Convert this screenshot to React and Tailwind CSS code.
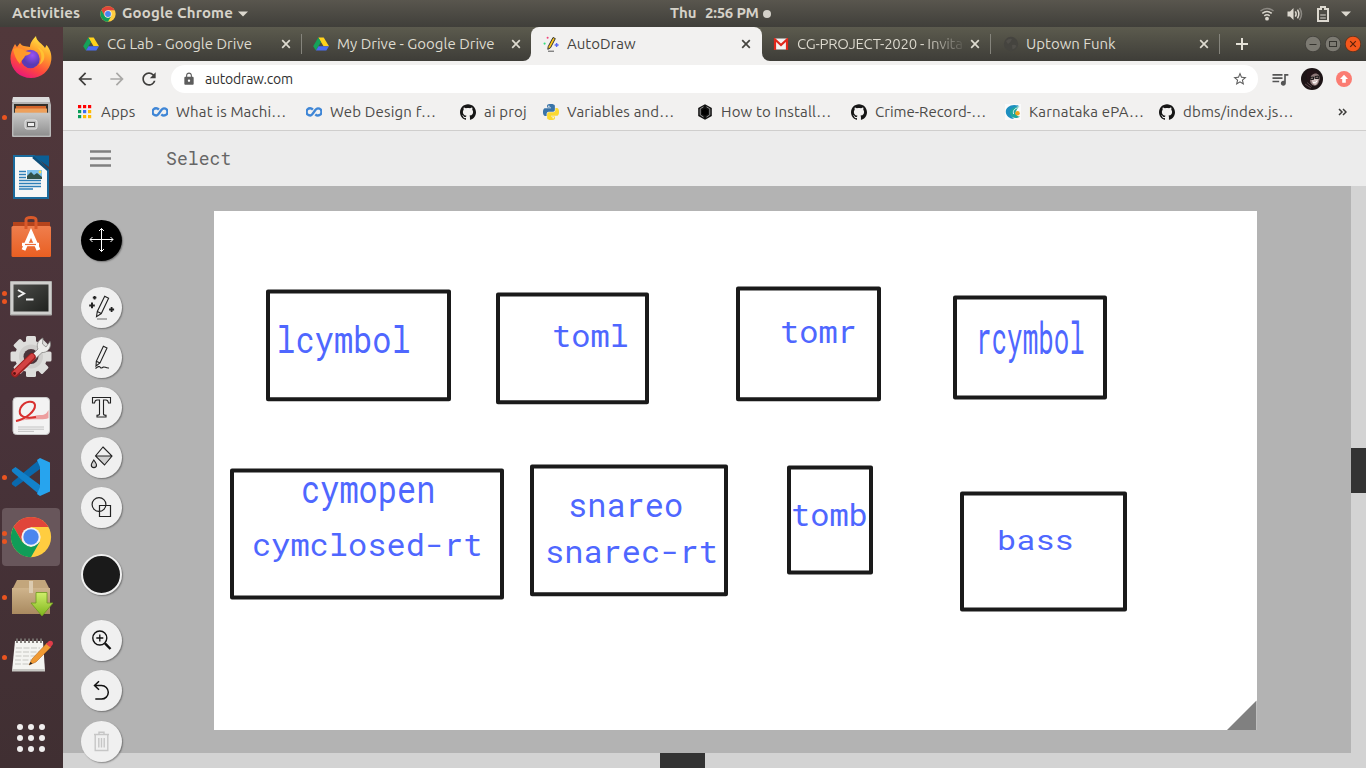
import React from "react";
import { MdArrowBack, MdArrowForward, MdRefresh, MdLock, MdStarBorder, MdQueueMusic } from "react-icons/md";
import { SiGithub } from "react-icons/si";

const ChromeLogo = ({ className }) => (
  <svg viewBox="0 0 48 48" className={className}>
    <circle cx="24" cy="24" r="23" fill="#ffcd40" />
    <path d="M4.1 12.5 A23 23 0 0 1 43.9 12.5 H24 L14 29.8 Z" fill="#e0453a" />
    <path d="M4.1 12.5 L14 29.8 L24 35.5 L33.9 29.8 L24 47 A23 23 0 0 1 4.1 12.5 Z" fill="#109d58" />
    <circle cx="24" cy="24" r="11" fill="#f2f2f2" />
    <circle cx="24" cy="24" r="8.8" fill="#4a86ef" />
  </svg>
);

const DriveLogo = () => (
  <svg viewBox="0 0 16 14" className="h-[14px] w-[16px] shrink-0">
    <path d="M5.3 0.5 H10.7 L16 9.3 H10.6 Z" fill="#ffd21c" />
    <path d="M5.3 0.5 L8 5 L2.9 13.6 L0.2 9.3 Z" fill="#13a259" />
    <path d="M5.5 9.3 H16 L13.3 13.6 H2.9 Z" fill="#4a6cf0" />
  </svg>
);

const AutoDrawLogo = () => (
  <svg viewBox="0 0 16 16" className="h-4 w-4 shrink-0">
    <path d="M10 1.5 L12.3 2.6 L7.5 11.8 L4.8 13.3 L5.2 10.6 Z" fill="#ffc91a" stroke="#333" strokeWidth="1" />
    <path d="M5 15.2 H11" stroke="#555" strokeWidth="1" />
    <circle cx="4.6" cy="1.8" r="1" fill="#f0447a" />
    <circle cx="1.6" cy="7.6" r="1.1" fill="#35e07c" />
    <path d="M13.6 7 V11 M11.6 9 H15.6" stroke="#5568f5" strokeWidth="1.4" />
  </svg>
);

const GmailLogo = () => (
  <svg viewBox="0 0 16 12" className="h-3 w-4 shrink-0">
    <rect x="1" y="0.5" width="14" height="11" fill="#f4f2f1" />
    <path d="M2 12 V1.5 L8 7 L14 1.5 V12" fill="none" stroke="#e0281c" strokeWidth="2.2" />
  </svg>
);

const GlobeIcon = () => (
  <svg viewBox="0 0 16 16" className="h-4 w-4 shrink-0">
    <circle cx="8" cy="8" r="7.2" fill="#45443f" />
    <path d="M3 5 Q6 2 9 3 Q8 6 5 8 Z M9 9 Q12 8 13.5 10 Q12 13 9.5 13.5 Z" fill="#514f4a" />
  </svg>
);

const Close = ({ className = "" }) => (
  <svg viewBox="0 0 10 10" className={`h-[10px] w-[10px] shrink-0 ${className}`}>
    <path d="M1.2 1.2 L8.8 8.8 M8.8 1.2 L1.2 8.8" stroke="currentColor" strokeWidth="1.7" />
  </svg>
);

const Infinity8 = () => (
  <svg viewBox="0 0 16 10" className="h-[10px] w-4 shrink-0">
    <path
      d="M6.9 2.6 C5.8 1.4 4.8 1.3 4.1 1.3 A3.5 3.5 0 0 0 4.1 8.5 C7.2 8.5 8.6 1.4 12 1.4 A3.5 3.5 0 0 1 12 8.5 C10.8 8.5 10 8 9.3 7.3"
      fill="none"
      stroke="#3f86d6"
      strokeWidth="2.4"
    />
  </svg>
);

const AppsGrid = () => (
  <svg viewBox="0 0 14 14" className="h-[14px] w-[14px] shrink-0">
    {["#f00", "#f00", "#f00", "#0a9d58", "#3b6cf5", "#ffba00", "#0a9d58", "#ffba00", "#ffba00"].map((c, i) => (
      <rect key={i} x={(i % 3) * 5} y={Math.floor(i / 3) * 5} width="3.2" height="3.2" fill={c} />
    ))}
  </svg>
);

const snake =
  "M14.25.18l.9.2.73.26.59.3.45.32.34.34.25.34.16.33.1.3.04.26.02.2-.01.13V8.5l-.05.63-.13.55-.21.46-.26.38-.3.31-.33.25-.35.19-.35.14-.33.1-.3.07-.26.04-.21.02H8.77l-.69.05-.59.14-.5.22-.41.27-.33.32-.27.35-.2.36-.15.37-.1.35-.07.32-.04.27-.02.21v3.06H3.17l-.21-.03-.28-.07-.32-.12-.35-.18-.36-.26-.36-.36-.35-.46-.32-.59-.28-.73-.21-.88-.14-1.05-.05-1.23.06-1.22.16-1.04.24-.87.32-.71.36-.57.4-.44.42-.33.42-.24.4-.16.36-.1.32-.05.24-.01h.16l.06.01h8.16v-.83H6.18l-.01-2.75-.02-.37.05-.34.11-.31.17-.28.25-.26.31-.23.38-.2.44-.18.51-.15.58-.12.64-.1.71-.06.77-.04.84-.02 1.27.05z";

const PythonLogo = () => (
  <svg viewBox="0 0 24 24" className="h-4 w-4 shrink-0">
    <path d={snake} fill="#3a74a8" />
    <path d={snake} fill="#fbd932" transform="rotate(180 12 12)" />
    <circle cx="8.8" cy="3.4" r="1.1" fill="#fff" />
    <circle cx="15.2" cy="20.6" r="1.1" fill="#fff" />
  </svg>
);

const HexLogo = () => (
  <svg viewBox="0 0 16 16" className="h-4 w-4 shrink-0">
    <path d="M8 0.3 L14.8 4.1 V11.9 L8 15.7 L1.2 11.9 V4.1 Z" fill="#111" />
    <path d="M6.5 2.8 L3.2 4.8 V10.9 L6.5 13 M9.5 2.8 L12.8 4.8 V10.9 L9.5 13" fill="none" stroke="#a5a5a5" strokeWidth="0.9" />
    <path d="M8 4.5 L11 6.2 V9.8 L8 11.5 L5 9.8 V6.2 Z" fill="#000" />
  </svg>
);

const SwirlLogo = () => (
  <svg viewBox="0 0 16 16" className="h-4 w-4 shrink-0">
    <rect width="16" height="16" fill="#fafafa" />
    <path d="M14 2 C7 -1 0.5 3 0.8 8 C1 12 5 15 9 15 C5 12 4 5 14 2 Z" fill="#1d8fc0" />
    <path d="M14.5 2.8 C7.5 2.5 3.8 6 5.3 10.5 C7 14.5 12 15 15 12.5 C11 12.5 8 8 14.5 2.8 Z" fill="#1fa79b" />
    <path d="M14.5 3.6 C9.5 4 7.6 6.5 8.6 10" fill="none" stroke="#fafafa" strokeWidth="0.9" />
    <circle cx="12.5" cy="9.3" r="2.3" fill="#f0a31c" />
  </svg>
);

const Github = () => <SiGithub className="h-4 w-4 shrink-0 text-[#161616]" />;

const Caret = () => (
  <svg viewBox="0 0 10 6" className="h-[6px] w-[10px]">
    <path d="M0 0.5 H10 L5 5.6 Z" fill="#dcd8cf" />
  </svg>
);

function TopBar() {
  return (
    <header className="flex h-[27px] items-center bg-linear-to-b from-[#59564e] to-[#403f3a] text-[15px] font-bold text-[#d6d2c9]">
      <span className="ml-3 w-[88px] whitespace-nowrap tracking-[0.15px]">Activities</span>
      <ChromeLogo className="h-4 w-4" />
      <span className="ml-[6px] w-[116px] whitespace-nowrap tracking-[0.15px]">Google Chrome</span>
      <Caret />
      <span className="ml-[422px] w-[35px] whitespace-nowrap">Thu</span>
      <span className="w-[58px] whitespace-nowrap tracking-[-0.25px]">2:56 PM</span>
      <span className="h-2 w-2 rounded-full bg-[#d4d1ca]" />
      <div className="ml-auto flex items-center pr-[15px]">
        <svg viewBox="0 0 16 14" className="mr-3 h-[14px] w-4" fill="none" strokeWidth="1.5">
          <path d="M1.5 4 Q8 -1 14.5 4" stroke="#8b8882" />
          <path d="M3.3 6.4 Q8 2.8 12.7 6.4" stroke="#dcd8cf" />
          <path d="M5.3 8.8 Q8 6.7 10.7 8.8" stroke="#dcd8cf" />
          <circle cx="8" cy="11.7" r="1.9" fill="#dcd8cf" />
        </svg>
        <svg viewBox="0 0 16 14" className="mr-[14px] h-[14px] w-4" fill="none" strokeWidth="1.5">
          <path d="M0.5 4.5 H3 L6.5 1 V13 L3 9.5 H0.5 Z" fill="#dcd8cf" />
          <path d="M8.3 4.3 Q10 7 8.3 9.7 M10.5 2.7 Q13.2 7 10.5 11.3" stroke="#dcd8cf" />
          <path d="M12.5 1 Q16.5 7 12.5 13" stroke="#8b8882" />
        </svg>
        <svg viewBox="0 0 12 16" className="mr-3 h-4 w-3" fill="none">
          <path d="M1 3 H4 V1 H8 V3 H11 V15 H1 Z" stroke="#dcd8cf" strokeWidth="2" />
          <path d="M3.2 9 H8.8 M3.2 12 H8.8" stroke="#dcd8cf" strokeWidth="1.2" />
        </svg>
        <Caret />
      </div>
    </header>
  );
}

const FirefoxIcon = () => (
  <svg viewBox="0 0 44 44" className="h-11 w-11">
    <defs>
      <linearGradient id="ff" x1="0.8" y1="0" x2="0.3" y2="1">
        <stop offset="0" stopColor="#fff34a" /><stop offset="0.35" stopColor="#ffa22b" /><stop offset="0.7" stopColor="#ff4a3c" /><stop offset="1" stopColor="#e8157c" />
      </linearGradient>
      <radialGradient id="ffp" cx="0.6" cy="0.3"><stop offset="0" stopColor="#9a52f5" /><stop offset="1" stopColor="#5a3bb4" /></radialGradient>
    </defs>
    <path d="M27 1 C27 6 34 9 36 13 L37.5 10 C41 14 43 19 42.3 25 C41 36 32 43 22 43 C11 43 2 35 1.5 24 C1.3 19 3 14 6 9 L8 12 L11 8 C12 10 14 11 15 11 L21 12 C21 8 24 4 27 1 Z" fill="url(#ff)" />
    <circle cx="21.5" cy="24" r="9.2" fill="url(#ffp)" />
    <path d="M4 14 C8 12 13 13 16 16 L22 17.5 C21 20 17 20.5 16 21 C15 24 12 25 11 29 C7 25 5 19 4 14 Z" fill="#ff9a2a" />
    <path d="M28 12 C34 17 33 25 30 30 C38 26 37 15 28 12 Z" fill="#ffc933" opacity="0.8" />
  </svg>
);

const FilesIcon = () => (
  <svg viewBox="0 0 44 44" className="h-11 w-11">
    <defs><linearGradient id="fl" x1="0" y1="0" x2="0" y2="1"><stop offset="0" stopColor="#c9c9c9" /><stop offset="1" stopColor="#8e8e8e" /></linearGradient></defs>
    <path d="M4 2 H40 L42 10 V41 Q42 42 41 42 H4 Q3 42 3 41 V10 Z" fill="#b4b4b4" />
    <path d="M4 2 H40 L41 7 H3 Z" fill="#dcdcdc" />
    <rect x="5" y="9" width="34" height="10" fill="#34302b" />
    <rect x="7" y="11" width="30" height="3" fill="#d3652b" />
    <rect x="6" y="13.5" width="32" height="5" fill="#eda05c" />
    <rect x="4" y="18" width="37" height="23" rx="1" fill="url(#fl)" stroke="#c8c8c8" strokeWidth="0.6" />
    <rect x="16" y="25" width="12" height="9" rx="2" fill="#b9b9b9" stroke="#e6e6e6" />
    <rect x="18.5" y="27.5" width="7" height="4" fill="#eee" stroke="#555" />
  </svg>
);

const WriterIcon = () => (
  <svg viewBox="0 0 44 44" className="h-11 w-11">
    <path d="M5 1 H25 L39 15 V43 H5 Z" fill="#f7f7f7" stroke="#1a6a9c" strokeWidth="2" />
    <path d="M24 0.5 H40 V12 Z" fill="#0b5f95" />
    <path d="M24 2 L39 15" stroke="#0e4e79" strokeWidth="2.5" />
    <path d="M10 16.5 H17 M10 19.5 H17 M10 22.5 H17 M10 25.5 H32 M10 28.5 H32 M10 31.5 H32 M10 34 H24" stroke="#2e7fb8" strokeWidth="1.5" />
    <rect x="18" y="15" width="15" height="9" fill="#7cc0ec" />
    <path d="M18 24 V21 L22 17 L25 20 L28 18 L33 22 V24 Z" fill="#31524a" />
    <circle cx="31" cy="17" r="1.4" fill="#f7dc4c" />
  </svg>
);

const SoftwareIcon = () => (
  <svg viewBox="0 0 44 44" className="h-11 w-11">
    <defs><linearGradient id="sw" x1="0" y1="0" x2="0" y2="1"><stop offset="0" stopColor="#ef7e4d" /><stop offset="1" stopColor="#e95f22" /></linearGradient></defs>
    <path d="M4 7 H41 V12 H4 Z" fill="#b5441c" />
    <rect x="2.5" y="11" width="39.5" height="31" rx="1.5" fill="url(#sw)" />
    <path d="M17 14 V5 Q17 2.5 22 2.5 Q27 2.5 27 5 V14" fill="none" stroke="#d9592a" strokeWidth="3" />
    <path d="M14.5 35 L22 18 L29.5 35" fill="none" stroke="#fff" strokeWidth="4" />
    <path d="M13 29.5 H30" stroke="#fff" strokeWidth="3.4" />
    <path d="M16 29.5 H27" stroke="#ec6c38" strokeWidth="1.2" />
  </svg>
);

const TerminalIcon = () => (
  <svg viewBox="0 0 44 44" className="h-11 w-11">
    <defs><linearGradient id="tm" x1="0" y1="0" x2="1" y2="1"><stop offset="0" stopColor="#4c4d4a" /><stop offset="1" stopColor="#20221f" /></linearGradient></defs>
    <rect x="1" y="6" width="42" height="34.5" rx="1" fill="#b0b0ae" />
    <rect x="2" y="7" width="40" height="32" fill="#cfcfcd" />
    <rect x="4.5" y="9.5" width="35" height="27" fill="url(#tm)" />
    <path d="M9 15 L15 18.5 L9 22" fill="none" stroke="#f0f0f0" strokeWidth="2" />
    <path d="M17 24.5 H24.5" stroke="#f0f0f0" strokeWidth="2" />
  </svg>
);

const SettingsIcon = () => (
  <svg viewBox="0 0 44 44" className="h-11 w-11">
    {[0, 45, 90, 135].map((a) => (
      <rect key={a} x="17" y="1" width="10" height="41" rx="1.5" fill="#dededc" transform={`rotate(${a} 22 21.5)`} />
    ))}
    <circle cx="22" cy="21.5" r="16" fill="#dededc" />
    <circle cx="22" cy="21.5" r="12" fill="#cfcecc" />
    <circle cx="22" cy="21.5" r="7.5" fill="#4a353b" />
    <path d="M19 24 L29 14 C27 10 29 5 34 3 L33.5 9 L37 12 L41 6.5 C43 13 38 18 33 17.5 L23 27 Z" fill="#ececea" stroke="#858583" strokeWidth="0.8" />
    <path d="M6 38.5 L23 22" stroke="#9b1f1f" strokeWidth="7.5" strokeLinecap="round" />
    <path d="M6 38 L23 21.5" stroke="#d34242" strokeWidth="5" strokeLinecap="round" />
    <circle cx="5.5" cy="38.5" r="1.4" fill="#5b1111" />
  </svg>
);

const DocViewerIcon = () => (
  <svg viewBox="0 0 44 44" className="h-11 w-11">
    <rect x="4" y="2.5" width="36.5" height="37" rx="3.5" fill="#f3f3f3" stroke="#c8c8c8" />
    <path d="M7 26 C16 26 25 19 32 20 C36 20 38 18 39.5 15 V23 C34 26 24 22 7 27 Z" fill="#e85a5a" fillOpacity="0.55" />
    <path d="M7 26 C17 24 26.5 16 26 10 C25 5.5 16 5 11.5 13 C8 22 17 24 27 22" fill="none" stroke="#d8302f" strokeWidth="2" />
    <path d="M9 32 H35 M9 34.2 H35 M9 36.4 H25" stroke="#bdbdbd" strokeWidth="0.9" />
  </svg>
);

const CodeIcon = () => (
  <svg viewBox="0 0 44 44" className="h-11 w-11">
    <path d="M3 29.5 L6.5 32 L31 14 V4 L4 26.5 Q2 28 3 29.5 Z" fill="#0a69ad" />
    <path d="M3 14.5 L6.5 12 L31 30 V40 L4 17.5 Q2 16 3 14.5 Z" fill="#1282cb" />
    <path d="M31 3 L41 7.5 V36.5 L31 41 L28 39 L31 32 V12 L28 5 Z" fill="#27a4ee" />
  </svg>
);

const PackageIcon = () => (
  <svg viewBox="0 0 44 44" className="h-11 w-11">
    <defs>
      <linearGradient id="pk" x1="0" y1="0" x2="0" y2="1"><stop offset="0" stopColor="#cfb48c" /><stop offset="1" stopColor="#a98a60" /></linearGradient>
      <linearGradient id="ar" x1="0" y1="0" x2="0" y2="1"><stop offset="0" stopColor="#cfee6a" /><stop offset="1" stopColor="#7fb51c" /></linearGradient>
    </defs>
    <path d="M8 5 H36 L41 15 H3 Z" fill="#c3a67c" />
    <rect x="3" y="13" width="38" height="26" fill="url(#pk)" />
    <path d="M20 6 H24 V18 H20 Z" fill="#dccbb0" />
    <path d="M27 17.5 H38 V28 H44 L33 41 L22 28 H27 Z" fill="url(#ar)" stroke="#6c9a1e" strokeWidth="0.8" />
  </svg>
);

const NotesIcon = () => (
  <svg viewBox="0 0 44 44" className="h-11 w-11">
    <path d="M6 6 H34 L36 36 H3 Z" fill="#f4f4f1" />
    <path d="M3 34 H36 V36.5 H3 Z" fill="#c8c8c4" />
    <path d="M8 3.5 V8 M12 3.5 V8 M16 3.5 V8 M20 3.5 V8 M24 3.5 V8 M28 3.5 V8 M32 3.5 V8" stroke="#77736f" strokeWidth="1.8" />
    <path d="M7 13 H31 M6.5 17 H31 M6.5 21 H30 M6 25 H22 M6 29 H20" stroke="#c6c6c2" strokeWidth="1.2" strokeDasharray="6 1.5" />
    <path d="M20 30 L23 24 L38 8 L42 12 L27 27 Z" fill="#f09a33" stroke="#b86a1d" strokeWidth="0.6" />
    <path d="M37 9 L40 6 Q44 5 44 9 L41.5 12.5 Z" fill="#df3d49" />
    <path d="M20 30 L21.5 27 L23.5 28.5 Z" fill="#222" />
  </svg>
);

const dock = [
  { Icon: FirefoxIcon, dots: 0 },
  { Icon: FilesIcon, dots: 1 },
  { Icon: WriterIcon, dots: 0 },
  { Icon: SoftwareIcon, dots: 0 },
  { Icon: TerminalIcon, dots: 2 },
  { Icon: SettingsIcon, dots: 0 },
  { Icon: DocViewerIcon, dots: 0 },
  { Icon: CodeIcon, dots: 1 },
  { Icon: () => <ChromeLogo className="h-[42px] w-[42px]" />, dots: 2, active: true },
  { Icon: PackageIcon, dots: 1 },
  { Icon: NotesIcon, dots: 1 },
];

function Dock() {
  return (
    <nav className="flex w-[63px] shrink-0 flex-col items-center bg-linear-to-b from-[#51383b] via-[#49333a] to-[#402f32]">
      {dock.map(({ Icon, dots, active }, i) => (
        <div key={i} className="flex h-[60px] w-full items-center">
          <div className={`ml-[2px] flex h-[58px] w-[58px] items-center rounded-[4px] ${active ? "bg-[#68565b]" : ""}`}>
            <div className="flex w-[5px] shrink-0 flex-col gap-[3px]">
              {Array.from({ length: dots }, (_, d) => (
                <span key={d} className="h-[5px] w-[5px] rounded-full bg-[#e95420]" />
              ))}
            </div>
            <div className="ml-[2px] flex w-11 justify-center">
              <Icon />
            </div>
          </div>
        </div>
      ))}
      <div className="mr-[2px] mt-[37px] grid grid-cols-3 gap-[5px]">
        {Array.from({ length: 9 }, (_, i) => (
          <span key={i} className="h-[6px] w-[6px] rounded-full bg-[#f0eeee]" />
        ))}
      </div>
    </nav>
  );
}

function Tab({ icon, title, width, gap = "ml-2", fade }) {
  return (
    <div className={`flex h-[34px] shrink-0 items-center text-[#dedbd0] ${width}`}>
      {icon}
      <span className={`flex-1 whitespace-nowrap ${gap} ${fade ? "bg-linear-to-r from-[#dedbd0] from-75% to-[#4f4e46] to-98% bg-clip-text tracking-[-0.27px] text-transparent" : ""}`}>
        {title}
      </span>
      <Close />
    </div>
  );
}

function TabStrip() {
  return (
    <div className="flex h-[34px] items-center bg-linear-to-b from-[#5c5b4e] to-[#3e3d38] text-[15px]">
      <div className="w-5 shrink-0" />
      <Tab icon={<DriveLogo />} title="CG Lab - Google Drive" width="w-[208px]" />
      <div className="ml-[10px] mr-[11px] h-5 w-px shrink-0 bg-[#85847c]" />
      <Tab icon={<DriveLogo />} title="My Drive - Google Drive" width="w-[208px]" />
      <div className="ml-[2px] h-[34px] shrink-0 bg-[#f2f1f0]">
        <div className="h-[34px] w-2 rounded-br-[8px] bg-linear-to-b from-[#5c5b4e] to-[#3e3d38]" />
      </div>
      <div className="h-[34px] w-[231px] shrink-0 bg-[#5c5b4e]">
        <div className="flex h-[34px] w-full items-center rounded-t-[8px] bg-[#f2f1f0] pl-3 pr-[11px] text-[#45443f]">
          <AutoDrawLogo />
          <span className="ml-2 flex-1">AutoDraw</span>
          <Close />
        </div>
      </div>
      <div className="h-[34px] shrink-0 bg-[#f2f1f0]">
        <div className="h-[34px] w-2 rounded-bl-[8px] bg-linear-to-b from-[#5c5b4e] to-[#3e3d38]" />
      </div>
      <div className="w-[3px] shrink-0" />
      <Tab icon={<GmailLogo />} title="CG-PROJECT-2020 - Invita" width="w-[207px]" fade />
      <div className="ml-[10px] mr-3 h-5 w-px shrink-0 bg-[#85847c]" />
      <Tab icon={<GlobeIcon />} title="Uptown Funk" width="w-[206px]" gap="ml-[7px]" />
      <div className="ml-[10px] h-5 w-px shrink-0 bg-[#85847c]" />
      <svg viewBox="0 0 12 12" className="ml-4 h-3 w-3 shrink-0"><path d="M6 0 V12 M0 6 H12" stroke="#e4e1d7" strokeWidth="2" /></svg>
      <div className="ml-auto mr-[5px] flex gap-1">
        <svg viewBox="0 0 16 16" className="h-4 w-4"><circle cx="8" cy="8" r="7.8" fill="#7c7a72" stroke="#383732" strokeWidth="0.7" /><path d="M4.5 8.5 H11.5" stroke="#35342f" /></svg>
        <svg viewBox="0 0 16 16" className="h-4 w-4"><circle cx="8" cy="8" r="7.8" fill="#7c7a72" stroke="#383732" strokeWidth="0.7" /><rect x="4.5" y="5.5" width="7" height="5" fill="none" stroke="#35342f" /></svg>
        <svg viewBox="0 0 16 16" className="h-4 w-4"><circle cx="8" cy="8" r="7.8" fill="#f4571c" stroke="#4a2a1a" strokeWidth="0.7" /><path d="M5.2 5.2 L10.8 10.8 M10.8 5.2 L5.2 10.8" stroke="#5a210b" strokeWidth="1.2" /></svg>
      </div>
    </div>
  );
}

function Toolbar() {
  return (
    <div className="flex h-9 items-center pl-3">
      <MdArrowBack className="h-5 w-5 text-[#3f3e3c]" />
      <MdArrowForward className="ml-3 h-5 w-5 text-[#a9a8a6]" />
      <MdRefresh className="ml-3 h-5 w-5 text-[#3f3e3c]" />
      <div className="ml-3 flex h-7 w-[1087px] items-center rounded-full bg-white pl-[11px] pr-[10px]">
        <MdLock className="h-[14px] w-[14px] text-[#5d5d5d]" />
        <span className="ml-[9px] flex-1 text-[14px] tracking-[-0.2px] text-[#2f2f2f]">autodraw.com</span>
        <MdStarBorder className="h-4 w-4 text-[#5d5d5d]" />
      </div>
      <MdQueueMusic className="ml-[12px] h-5 w-5 text-[#555]" />
      <svg viewBox="0 0 22 22" className="ml-[11px] h-[22px] w-[22px]">
        <circle cx="11" cy="11" r="11" fill="#1d1416" />
        <path d="M9 6 Q13 3 18 7 Q20 12 16 17 Q12 19 9.5 15 Q7 11 9 6 Z" fill="#8f7a7a" />
        <path d="M10.5 11.5 Q13 10 17.5 11 Q17 15 14.5 17 Q11 16.5 10.5 11.5 Z" fill="#d8c6c5" />
        <path d="M6 3 Q13 0 18 5 Q12 5 10 8 Q8.5 11 9.5 16 Q4 11 6 3 Z" fill="#241418" />
        <path d="M9 9.5 L12.5 9 V11.5 H9.5 Z M14 8.5 L17.7 8 V10.5 H14.3 Z" fill="#7d6b6b" stroke="#111" strokeWidth="0.9" />
        <path d="M12 14.5 Q14.5 15.5 16 13" stroke="#fff" fill="none" />
        <path d="M4 16 L10 20 M6 14.5 L11 18.5" stroke="#74585c" strokeWidth="0.7" />
      </svg>
      <svg viewBox="0 0 16 16" className="ml-[13px] h-4 w-4"><circle cx="8" cy="8" r="8" fill="#fb7c72" /><path d="M8 3.8 L12 8 H9.8 V11.8 H6.2 V8 H4 Z" fill="#fff" /></svg>
    </div>
  );
}

const bookmarks = [
  { icon: <AppsGrid />, text: "Apps", w: "w-[74px]", gap: "ml-[9px]" },
  { icon: <Infinity8 />, text: "What is Machi…", w: "w-[154px]", gap: "ml-2" },
  { icon: <Infinity8 />, text: "Web Design f…", w: "w-[154px]", gap: "ml-2" },
  { icon: <Github />, text: "ai proj", w: "w-[83px]", gap: "ml-2" },
  { icon: <PythonLogo />, text: "Variables and…", w: "w-[154px]", gap: "ml-2" },
  { icon: <HexLogo />, text: "How to Install…", w: "w-[154px]", gap: "ml-2" },
  { icon: <Github />, text: "Crime-Record-…", w: "w-[154px]", gap: "ml-2", tight: true },
  { icon: <SwirlLogo />, text: "Karnataka ePA…", w: "w-[154px]", gap: "ml-2" },
  { icon: <Github />, text: "dbms/index.js…", w: "w-[154px]", gap: "ml-2" },
];

function BookmarksBar() {
  return (
    <div className="flex h-[34px] items-center border-b border-[#cfcecd] pb-[3px] pl-[15px] text-[15px] text-[#4c4b49]">
      {bookmarks.map((b) => (
        <div key={b.text} className={`flex shrink-0 items-center ${b.w}`}>
          {b.icon}
          <span className={`whitespace-nowrap ${b.gap} ${b.tight ? "" : "tracking-[0.17px]"}`}>{b.text}</span>
        </div>
      ))}
      <svg viewBox="0 0 9 8" className="ml-auto mr-[19px] h-2 w-[9px]" fill="none" stroke="#3c3b39" strokeWidth="1.5">
        <path d="M1 1 L4 4 L1 7 M5 1 L8 4 L5 7" />
      </svg>
    </div>
  );
}

const Glyph = ({ children, sw = 1.1 }) => (
  <svg viewBox="0 0 41 41" className="h-[41px] w-[41px]" fill="none" stroke="#222" strokeWidth={sw}>
    {children}
  </svg>
);

const tools = [
  { name: "select", cls: "bg-black", art: (
    <Glyph sw={1}><g stroke="#fff"><path d="M20.5 8.5 V31.5 M9 19.5 H32 M18 11 L20.5 8.5 L23 11 M18 29 L20.5 31.5 L23 29 M11.5 17 L9 19.5 L11.5 22 M29.5 17 L32 19.5 L29.5 22" /></g></Glyph>) },
  { name: "autodraw", cls: "mt-[26px] bg-[#f0f0f0]", art: (
    <Glyph><path d="M23.7 9.3 L27.6 11.2 L20.3 26.5 L15.5 29.6 L16.3 24.5 Z M16.3 24.5 L20.3 26.5" /><path d="M16 32 H26" stroke="#777" /><path d="M13.6 8.9 V12.5 M11.8 10.7 H15.4" strokeWidth="1.8" /><path d="M11 15.6 V21.2 M8.2 18.4 H13.8" strokeWidth="2" /><path d="M30.6 20 V25 M28.1 22.5 H33.1" strokeWidth="1.8" /></Glyph>) },
  { name: "draw", cls: "mt-[9px] bg-[#f0f0f0]", art: (
    <Glyph><path d="M22.4 9.3 L26 11 L19 26 L15 29 L15.3 24.3 Z M15.3 24.3 L19 26" /><path d="M14.5 31.5 C17 29.5 18.5 29 19 30 C19.5 31.5 21 31 22.5 30 C24 29.5 25 31.5 28 31" /></Glyph>) },
  { name: "type", cls: "mt-[9px] bg-[#f0f0f0]", art: (
    <Glyph><path d="M11.5 10.5 H29.5 V16 H27.5 Q27 13 25 13 H22.5 V27 Q22.5 28.3 25 28.3 V30 H16 V28.3 Q18.5 28.3 18.5 27 V13 H16 Q14 13 13.5 16 H11.5 Z" /></Glyph>) },
  { name: "fill", cls: "mt-[9px] bg-[#f0f0f0]", art: (
    <Glyph><path d="M14.5 19 H31 L23.5 27.8 Z" fill="#d0d0d0" stroke="none" /><path d="M22 10 L31 19 L23.5 28 L14.5 19 Z M14.5 19 H31" /><path d="M12.8 23 Q10.3 26.8 10.3 28 A2.6 2.6 0 0 0 15.5 28 Q15.5 26.8 12.8 23 Z" fill="#d0d0d0" /></Glyph>) },
  { name: "shape", cls: "mt-[9px] bg-[#f0f0f0]", art: (
    <Glyph sw={1.2}><circle cx="18" cy="17.5" r="6.9" /><path d="M18.5 18.5 H29.5 V29.5 H18.5 Z" /></Glyph>) },
  { name: "color", cls: "mt-[26px] border-2 border-[#f0f0f0] bg-[#1a1a1a]", art: null },
  { name: "zoom", cls: "mt-[25px] bg-[#f0f0f0]", art: (
    <Glyph sw={1.4}><circle cx="18.8" cy="18" r="7" stroke="#111" /><path d="M18.8 14.5 V21.5 M15.3 18 H22.3" stroke="#111" strokeWidth="1.3" /><path d="M24 23.3 L29.5 29" stroke="#111" strokeWidth="2.4" /></Glyph>) },
  { name: "undo", cls: "mt-[9px] bg-[#f0f0f0]", art: (
    <Glyph sw={1.5}><path d="M18 11.2 L13.5 15.5 L18 19.8 M13.5 15.5 H20.5 A6.8 6.8 0 0 1 20.5 29.1 H14.3" stroke="#111" /></Glyph>) },
  { name: "delete", cls: "mt-[10px] bg-[#f0f0f0]", art: (
    <Glyph sw={1.4}><path d="M13 13.5 H28 M18 13.5 V11.3 H23 V13.5 M14.2 13.5 V29.5 H26.8 V13.5 M17.8 17 V26.5 M20.5 17 V26.5 M23.2 17 V26.5" stroke="#c6c6c6" /></Glyph>) },
];

function Palette() {
  return (
    <aside className="z-10 flex w-[151px] shrink-0 flex-col pl-[18px] pt-[34px]">
      {tools.map((t) => (
        <button key={t.name} aria-label={t.name} className={`flex h-[41px] w-[41px] shrink-0 items-center justify-center rounded-full shadow-[1px_1px_1.5px_rgba(0,0,0,0.35)] ${t.cls}`}>
          {t.art}
        </button>
      ))}
    </aside>
  );
}

const boxes = [
  [268, 291, 449, 398.7], [498, 294, 647, 401.7], [738, 288, 879, 398.7], [955, 297, 1105, 397],
  [232, 470, 502, 597], [532, 466, 726, 593.7], [789, 467, 871, 572], [962, 493, 1125, 609],
];

const words = [
  ["lcymbol", 276.3, 352.3, 1, 1.14], ["toml", 552, 346.7, 1, 1], ["tomr", 780, 342.7, 1, 1], ["rcymbol", 976, 353.5, 0.81, 1.38],
  ["cymopen", 301, 502.7, 1, 1.2], ["cymclosed-rt", 252, 555.7, 1, 1], ["snareo", 568, 516.7, 1, 1.04], ["snarec-rt", 545, 562.7, 1, 1],
  ["tomb", 791, 525.7, 1, 1], ["bass", 997, 549.7, 1, 0.86],
];

function Drawing() {
  return (
    <svg viewBox="214 210.5 1042.5 519.5" className="mt-[24.5px] h-[519.5px] w-[1042.5px] shrink-0 bg-white">
      <g fill="none" stroke="#1a1a1a" strokeWidth="4" strokeLinejoin="round">
        {boxes.map(([x1, y1, x2, y2]) => (
          <rect key={`${x1}`} x={x1} y={y1} width={x2 - x1} height={y2 - y1} />
        ))}
      </g>
      <g fill="#4f67ff" fontSize="32" className="font-['Roboto_Mono','Liberation_Mono',monospace]">
        {words.map(([t, x, y, sx, sy]) => (
          <text key={t} transform={`translate(${x} ${y}) scale(${sx} ${sy})`}>{t}</text>
        ))}
      </g>
      <path d="M1256.5 700 V730 H1226.5 Z" fill="#808080" />
    </svg>
  );
}

export default function App() {
  return (
    <div className="flex h-[768px] w-[1366px] flex-col overflow-hidden font-['Ubuntu','Noto_Sans',sans-serif]">
      <TopBar />
      <div className="flex min-h-0 flex-1">
        <Dock />
        <div className="flex min-w-0 flex-1 flex-col bg-[#f2f1f0]">
          <TabStrip />
          <Toolbar />
          <BookmarksBar />
          <div className="flex h-[55px] items-center bg-[#ececec] pl-[27px]">
            <svg viewBox="0 0 21 17" className="h-[17px] w-[21px]"><path d="M0 1.5 H21 M0 8.5 H21 M0 15.5 H21" stroke="#808080" strokeWidth="2.6" /></svg>
            <span className="ml-[55px] font-['Roboto_Mono','Liberation_Mono',monospace] text-[18px] tracking-[0.1px] text-[#666]">Select</span>
          </div>
          <main className="grid h-[582px] grid-cols-[1288px_15px] grid-rows-[567px_15px] bg-[#d3d3d3]">
            <div className="z-10 flex bg-[#b3b3b3]">
              <Palette />
              <Drawing />
            </div>
            <div className="pt-[262px]"><div className="h-[45px] bg-[#333]" /></div>
            <div className="pl-[597px]"><div className="h-[15px] w-[45px] bg-[#333]" /></div>
          </main>
        </div>
      </div>
    </div>
  );
}
